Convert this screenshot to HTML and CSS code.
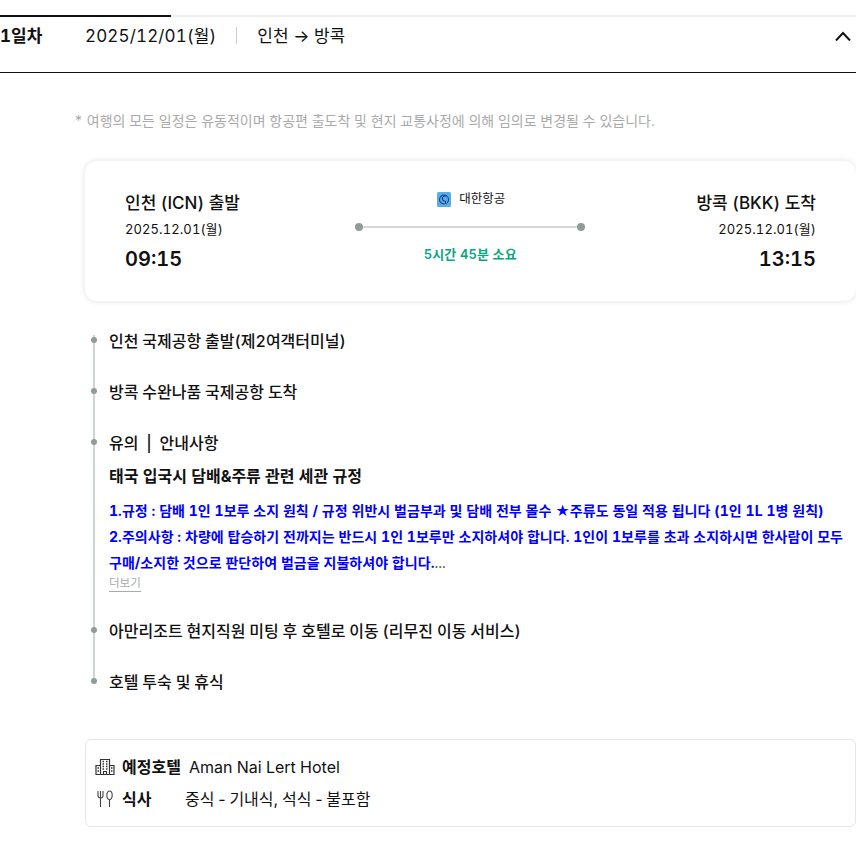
FILE: index.html
```html
<!DOCTYPE html>
<html lang="ko">
<head>
    <meta charset="UTF-8">
    <meta name="viewport" content="width=device-width, initial-scale=1.0">
    <title>여행 일정</title>
    <link rel="stylesheet" href="styles.css">
</head>
<body>
    <div class="tab-line"><div class="tab-active"></div></div>
    <div class="day-head">
        <span class="day-num">1일차</span>
        <span class="day-date">2025/12/01(월)</span>
        <span class="day-route">인천 → 방콕</span>
        <svg class="chevron" width="16" height="10" viewBox="0 0 16 10">
            <path d="M1 9.500L8 2l7 7.500" fill="none" stroke="#111" stroke-width="2"/>
        </svg>
    </div>

    <div class="day-body">
        <p class="notice">* 여행의 모든 일정은 유동적이며 항공편 출도착 및 현지 교통사정에 의해 임의로 변경될 수 있습니다.</p>

        <div class="flight-card">
            <div class="port">
                <div class="port-name">인천 (ICN) 출발</div>
                <div class="port-date">2025.12.01(월)</div>
                <div class="port-time">09:15</div>
            </div>
            <div class="route">
                <div class="airline">
                    <svg class="airline-logo" width="14" height="15" viewBox="0 0 14 15">
                        <rect width="14" height="15" rx="1.500" fill="#55aee8"/>
                        <circle cx="7" cy="7.500" r="4.500" fill="none" stroke="#1c3f8f" stroke-width="1.100"/>
                        <path d="M9.500 4C7 3.500 4.500 5 5.500 7.500S9.500 8 8.500 11" fill="none" stroke="#1c3f8f" stroke-width="1.100"/>
                    </svg>
                    <span>대한항공</span>
                </div>
                <div class="route-line"></div>
                <div class="duration">5시간 45분 소요</div>
            </div>
            <div class="port port-right">
                <div class="port-name">방콕 (BKK) 도착</div>
                <div class="port-date">2025.12.01(월)</div>
                <div class="port-time">13:15</div>
            </div>
        </div>

        <ul class="timeline">
            <li class="stop">인천 국제공항 출발(제2여객터미널)</li>
            <li class="stop">방콕 수완나품 국제공항 도착</li>
            <li class="stop stop-note">
                유의 &nbsp;|&nbsp; 안내사항
                <div class="note-title">태국 입국시 담배&amp;주류 관련 세관 규정</div>
                <div class="note-text">
                    <div>1.규정 : 담배 1인 1보루 소지 원칙 / 규정 위반시 벌금부과 및 담배 전부 몰수 ★주류도 동일 적용 됩니다 (1인 1L 1병 원칙)</div>
                    <div>2.주의사항 : 차량에 탑승하기 전까지는 반드시 1인 1보루만 소지하셔야 합니다. 1인이 1보루를 초과 소지하시면 한사람이 모두 구매/소지한 것으로 판단하여 벌금을 지불하셔야 합니다.<span class="dots">...</span></div>
                </div>
                <a class="more">더보기</a>
            </li>
            <li class="stop">아만리조트 현지직원 미팅 후 호텔로 이동 (리무진 이동 서비스)</li>
            <li class="stop">호텔 투숙 및 휴식</li>
        </ul>

        <div class="info-box">
            <div class="info-row">
                <svg class="info-icon" width="20" height="18" viewBox="0 0 20 18">
                    <path d="M5.500 16.500V1.500h9v15M1 16.500V7.500h4.500M14.500 7.500H19v9M0.500 16.500h19M8.500 16.500v-3h3v3" fill="none" stroke="#333" stroke-width="1.200"/>
                    <path d="M7.500 3.500h1.500M11 3.500h1.500M7.500 6h1.500M11 6h1.500M7.500 8.500h1.500M11 8.500h1.500M7.500 11h1.500M11 11h1.500M2.500 10h1.500M2.500 13h1.500M16 10h1.500M16 13h1.500" stroke="#333" stroke-width="1.300"/>
                </svg>
                <span class="info-label">예정호텔</span>
                <span class="info-hotel">Aman Nai Lert Hotel</span>
            </div>
            <div class="info-row">
                <svg class="info-icon" width="20" height="18" viewBox="0 0 20 18">
                    <path d="M3 1v4.500c0 1.500 1 2.500 2.500 2.500S8 7 8 5.500V1M5.500 1v16" fill="none" stroke="#444" stroke-width="1.100"/>
                    <path d="M14.500 9.500c-1.700 0-2.700-1.800-2.700-4.200S12.800 1 14.500 1s2.700 1.900 2.700 4.300-1 4.200-2.700 4.200zM14.500 9.500V17" fill="none" stroke="#444" stroke-width="1.100"/>
                </svg>
                <span class="info-label meal-label">식사</span>
                <span class="meal-text">중식 - 기내식, 석식 - 불포함</span>
            </div>
        </div>
    </div>
</body>
</html>
```

FILE: styles.css
```css
* {
    box-sizing: border-box;
}

body {
    margin: 0;
    padding-top: 15px;
    background-color: #fff;
    color: #111;
    font-family: Inter, "Noto Sans CJK KR", sans-serif;
    font-variant-numeric: tabular-nums;
    overflow-x: hidden;
}

.tab-line {
    height: 2px;
    background-color: #f0f0f0;
}

.tab-active {
    width: 171px;
    height: 2px;
    background-color: #111;
}

.day-head {
    display: flex;
    align-items: flex-start;
    height: 56px;
    padding-top: 7px;
    border-bottom: 1px solid #111;
    font-size: 17px;
    line-height: 24px;
}

.day-num {
    width: 85px;
    font-weight: 700;
}

.day-date {
    padding-right: 20px;
    letter-spacing: 0.15px;
}

.day-route {
    position: relative;
    padding-left: 21px;
}

.day-route::before {
    content: "";
    position: absolute;
    left: 0;
    top: 3px;
    width: 1px;
    height: 17px;
    background-color: #ccc;
}

.chevron {
    margin-left: auto;
    margin-right: 5px;
    margin-top: 7px;
}

.day-body {
    padding-left: 85px;
}

.notice {
    margin: 38px 0 0 -11px;
    font-size: 14px;
    line-height: 20px;
    color: #aaa;
}

.flight-card {
    display: flex;
    justify-content: space-between;
    height: 140px;
    margin-top: 30px;
    padding: 30px 40px 0;
    border-radius: 12px;
    box-shadow: 0 0 6px rgba(0, 0, 0, 0.12);
}

.port-name {
    font-size: 17px;
    font-weight: 500;
    line-height: 24px;
}

.port-date {
    margin-top: 4px;
    font-size: 13px;
    line-height: 20px;
    letter-spacing: 0.1px;
}

.port-time {
    margin-top: 7px;
    font-size: 20px;
    font-weight: 600;
    line-height: 26px;
}

.port-right {
    text-align: right;
}

.route {
    width: 230px;
    margin-left: 4px;
    margin-top: -1px;
    text-align: center;
}

.airline {
    display: flex;
    justify-content: center;
    align-items: center;
    gap: 8px;
    padding-left: 2px;
    font-size: 12.5px;
    line-height: 18px;
}

.route-line {
    position: relative;
    height: 2px;
    margin: 18px 4px 0;
    background-color: #d3d8d6;
}

.route-line::before,
.route-line::after {
    content: "";
    position: absolute;
    top: -3px;
    width: 8px;
    height: 8px;
    border-radius: 50%;
    background-color: #8f9c98;
}

.route-line::before {
    left: -4px;
}

.route-line::after {
    right: -4px;
}

.duration {
    margin-top: 16px;
    font-size: 13px;
    font-weight: 600;
    line-height: 20px;
    letter-spacing: 0.1px;
    color: #0aa582;
}

.timeline {
    position: relative;
    margin: 28px 0 0;
    padding: 0 0 0 24px;
    list-style: none;
}

.timeline::before {
    content: "";
    position: absolute;
    left: 8px;
    top: 6px;
    bottom: 13px;
    width: 2px;
    background-color: #cfd5d3;
}

.stop {
    position: relative;
    margin-bottom: 27px;
    font-size: 16px;
    font-weight: 500;
    line-height: 24px;
    word-spacing: -0.4px;
}

.stop::before {
    content: "";
    position: absolute;
    left: -18px;
    top: 8px;
    width: 6px;
    height: 6px;
    border-radius: 50%;
    background-color: #8f9c98;
}

.note-title {
    margin-top: 9px;
    font-weight: 700;
    word-spacing: 0;
}

.note-text {
    margin-top: 10px;
    font-size: 14px;
    font-weight: 700;
    line-height: 26px;
    letter-spacing: 0.04px;
    word-spacing: 0;
    color: #00f;
    word-break: keep-all;
}

.dots {
    font-weight: 400;
    color: #333;
}

.more {
    display: inline-block;
    border-bottom: 1px solid #aaa;
    font-size: 11.5px;
    font-weight: 400;
    line-height: 15px;
    color: #aaa;
    vertical-align: top;
}

.stop-note {
    margin-bottom: 19px;
}

.info-box {
    display: flex;
    flex-direction: column;
    gap: 8px;
    height: 88px;
    margin-top: 45px;
    padding: 15px 9px 0;
    border: 1px solid #e6e6e6;
    border-radius: 6px;
    font-size: 16px;
    line-height: 24px;
}

.info-row {
    display: flex;
    align-items: center;
}

.info-icon {
    margin-right: 7px;
}

.info-label {
    margin-right: 8px;
    font-weight: 700;
}

.meal-label {
    width: 63px;
    margin-right: 0;
}

.meal-text {
    font-variant-numeric: normal;
    word-spacing: -0.7px;
}
```
